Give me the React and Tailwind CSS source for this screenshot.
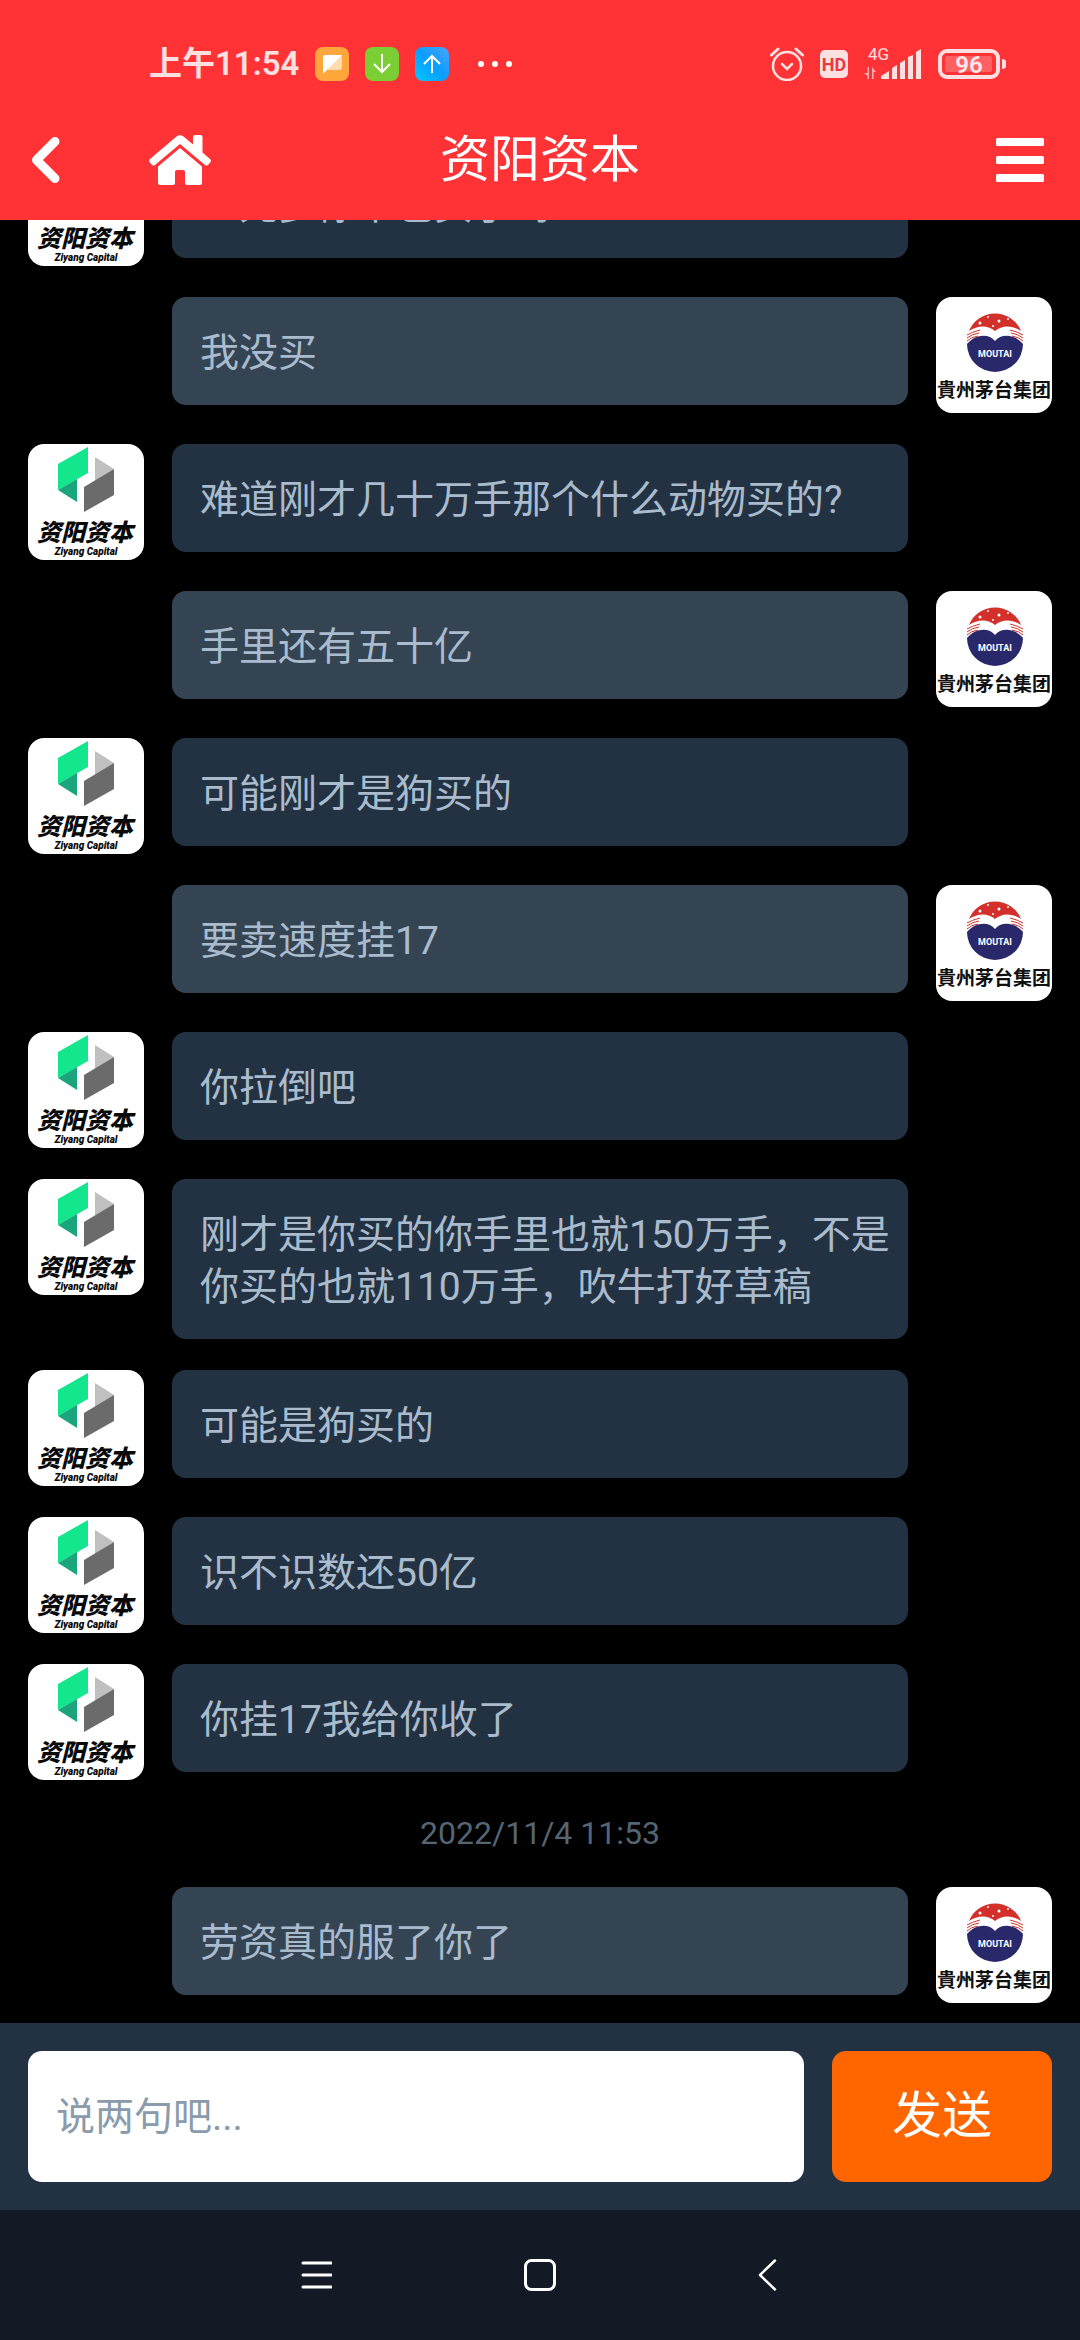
import React from 'react';

const messages = [
  { id: 1, from: 'ziyang', text: '一元多你不也买了吗' },
  { id: 2, from: 'moutai', text: '我没买' },
  { id: 3, from: 'ziyang', text: '难道刚才几十万手那个什么动物买的?' },
  { id: 4, from: 'moutai', text: '手里还有五十亿' },
  { id: 5, from: 'ziyang', text: '可能刚才是狗买的' },
  { id: 6, from: 'moutai', text: '要卖速度挂17' },
  { id: 7, from: 'ziyang', text: '你拉倒吧' },
  { id: 8, from: 'ziyang', text: '刚才是你买的你手里也就150万手，不是你买的也就110万手，吹牛打好草稿' },
  { id: 9, from: 'ziyang', text: '可能是狗买的' },
  { id: 10, from: 'ziyang', text: '识不识数还50亿' },
  { id: 11, from: 'ziyang', text: '你挂17我给你收了' },
  { id: 12, time: '2022/11/4 11:53' },
  { id: 13, from: 'moutai', text: '劳资真的服了你了' },
];

const ZiyangAvatar = () => (
  <svg className="block size-[116px] shrink-0 rounded-2xl bg-white" viewBox="0 0 116 116" role="img" aria-label="资阳资本">
    <path d="M30 20L60 3V29L30 46Z" fill="#13e68c" />
    <path d="M30 46L49 35V58Z" fill="#1ba57c" />
    <path d="M67 13L86 25L67 37Z" fill="#c0c0c0" />
    <path d="M56 43L86 25V51L56 68Z" fill="#6b6b6b" />
    <text x="57" y="97" textAnchor="middle" fontSize="24" fontWeight="900" fontStyle="italic" fill="#0a0a0a">资阳资本</text>
    <text x="58" y="111" textAnchor="middle" fontSize="10" fontWeight="900" fontStyle="italic" fill="#0a0a0a">Ziyang Capital</text>
  </svg>
);

const MoutaiAvatar = () => (
  <svg className="block size-[116px] shrink-0 rounded-2xl bg-white" viewBox="0 0 116 116" role="img" aria-label="贵州茅台集团">
    <path d="M33 34A28 28 0 0 1 85 34C76 28 66 28 59 34C52 28 42 28 33 34Z" fill="#d4302b" />
    <path d="M31 38Q36 35 44 33M31 41Q36 37 43 36M31 44Q35 40 42 39M32 47Q35 43 40 42M87 38Q82 35 74 33M87 41Q82 37 75 36M87 44Q83 40 76 39M86 47Q83 43 78 42" fill="none" stroke="#d4302b" strokeWidth="1" />
    <path d="M31 47C39 37 53 36 59 44C65 36 79 37 87 47A28 28 0 0 1 31 47Z" fill="#29286a" />
    <g fill="#fff">
      <circle cx="44" cy="26" r="1.5" />
      <circle cx="52" cy="20" r="1" />
      <circle cx="63" cy="24" r="1.5" />
      <circle cx="72" cy="22" r="1" />
      <circle cx="57" cy="29" r="1" />
    </g>
    <text x="59" y="60" textAnchor="middle" fontSize="9" fontWeight="700" fill="#fff">MOUTAI</text>
    <text x="1" y="100" fontSize="19" fontWeight="700" fill="#111">貴州茅台集团</text>
  </svg>
);

const Message = ({ message }) => {
  if (message.time) {
    return <time className="block text-center text-[32px] leading-[45px] text-[#566573]">{message.time}</time>;
  }
  const mine = message.from === 'moutai';
  return (
    <div className="flex items-start gap-7">
      {mine ? <div className="w-[116px] shrink-0"></div> : <ZiyangAvatar />}
      <p className={`min-w-0 flex-1 rounded-[14px] pt-[30px] pr-3 pb-[26px] pl-7 text-[39px] leading-[52px] text-[#a9bbcd] ${mine ? 'bg-[#344453]' : 'bg-[#233242]'}`}>
        {message.text}
      </p>
      {mine ? <MoutaiAvatar /> : <div className="w-[116px] shrink-0"></div>}
    </div>
  );
};

const StatusBar = () => (
  <div className="flex h-[100px] items-center pt-7 pl-[149px] pr-[74px] text-white/85">
    <span className="mr-4 text-[33px] leading-10 font-semibold">上午11:54</span>
    <div className="flex gap-4">
      <svg className="size-[34px]" viewBox="0 0 34 34">
        <rect width="34" height="34" rx="8" fill="#ffa63c" />
        <path d="M12 8H24Q27 8 27 11V20Q27 23 24 23H13Z" fill="#ffdcae" />
        <path d="M8 10Q8 8 10 8H27L8 27Z" fill="#fff" />
      </svg>
      <svg className="size-[34px]" viewBox="0 0 34 34">
        <rect width="34" height="34" rx="8" fill="#7bcf35" />
        <path d="M17 7V25M9 17L17 25L25 17" fill="none" stroke="#fff" strokeWidth="2" />
      </svg>
      <svg className="size-[34px]" viewBox="0 0 34 34">
        <defs>
          <linearGradient id="up" x1="0" y1="1" x2="1" y2="0">
            <stop offset="0" stopColor="#00c8ff" />
            <stop offset="0.5" stopColor="#0b9dff" />
            <stop offset="1" stopColor="#4aa4ff" />
          </linearGradient>
        </defs>
        <rect width="34" height="34" rx="8" fill="url(#up)" />
        <path d="M17 26V9M9 17L17 9L25 17" fill="none" stroke="#fff" strokeWidth="2" />
      </svg>
    </div>
    <svg className="ml-7 h-[6px] w-9" viewBox="0 0 36 6" fill="#fff">
      <circle cx="4" cy="3" r="3" />
      <circle cx="18" cy="3" r="3" />
      <circle cx="32" cy="3" r="3" />
    </svg>
    <div className="ml-auto flex items-center gap-4">
      <svg className="size-[34px]" viewBox="0 0 34 34" fill="none" stroke="currentColor" strokeLinecap="round">
        <circle cx="17" cy="19" r="14" strokeWidth="2.5" />
        <path d="M12 17L17 22L22 17" strokeWidth="2.5" />
        <path d="M1.500 8L8 2M26 2L32.500 8" strokeWidth="3" />
      </svg>
      <svg className="size-7" viewBox="0 0 28 28">
        <rect width="28" height="28" rx="5" fill="currentColor" />
        <text x="14" y="21" textAnchor="middle" fontSize="18" fontWeight="700" fill="#e63c3f">HD</text>
      </svg>
      <svg className="h-[34px] w-[58px]" viewBox="0 0 58 34" fill="currentColor">
        <text x="4" y="13" fontSize="17">4G</text>
        <path d="M5 20V32H3.500V29L0 26H3.500V20ZM8 32V20L12 25H9.500V32Z" opacity="0.700" />
        <path d="M17 32V29L25 24V32ZM28 21L33 18V32H28ZM36 16L41 13V32H36ZM44 10L49 8V32H44ZM52 5L57 2V32H52Z" />
      </svg>
      <svg className="h-[30px] w-[68px]" viewBox="0 0 68 30">
        <rect x="2" y="2" width="58" height="26" rx="7" fill="none" stroke="currentColor" strokeWidth="4" />
        <rect x="7" y="7" width="47" height="16" rx="2" fill="#ff6163" />
        <path d="M64 10Q68 10 68 13V17Q68 20 64 20Z" fill="currentColor" />
        <text x="31" y="24" textAnchor="middle" fontSize="24" fontWeight="600" fill="#ffe9ea">96</text>
      </svg>
    </div>
  </div>
);

const TopBar = () => (
  <nav className="grid h-[120px] grid-cols-3 items-center px-7 text-white">
    <div className="flex items-center gap-[87px]">
      <button type="button" aria-label="返回">
        <svg className="h-12 w-[34px]" viewBox="0 0 34 48" fill="none" stroke="currentColor" strokeWidth="9" strokeLinecap="round" strokeLinejoin="round">
          <path d="M27 5.500L8.500 24L27 42.500" />
        </svg>
      </button>
      <a href="#home" aria-label="首页">
        <svg className="h-[50px] w-[62px]" viewBox="0 0 62 50" fill="currentColor">
          <path d="M27.500 1.500Q31 -1 34.500 1.500L44 9.500V2Q44 0 46 0H51.500Q53.500 0 53.500 2V17.500L61 24Q62.500 25.500 61.500 27L59 30Q57.500 31 56 30L31 9L6 30Q4.500 31 3 30L0.500 27Q-0.500 25.500 1 24Z" />
          <path d="M31 13L53 31.500V48Q53 50 51 50H38Q36 50 36 48V37Q36 35 34 35H28Q26 35 26 37V48Q26 50 24 50H11Q9 50 9 48V31.500Z" />
        </svg>
      </a>
    </div>
    <h1 className="text-center text-[50px] leading-[60px]">资阳资本</h1>
    <button type="button" aria-label="菜单" className="mr-2 justify-self-end">
      <svg className="h-11 w-12" viewBox="0 0 48 44" fill="currentColor">
        <rect width="48" height="8" rx="1.500" />
        <rect y="18" width="48" height="8" rx="1.500" />
        <rect y="36" width="48" height="8" rx="1.500" />
      </svg>
    </button>
  </nav>
);

const Composer = () => (
  <form className="flex shrink-0 gap-7 bg-[#233242] p-7" onSubmit={(e) => e.preventDefault()}>
    <input
      type="text"
      aria-label="说两句吧"
      placeholder="说两句吧..."
      className="h-[131px] min-w-0 flex-1 rounded-[14px] bg-white px-7 text-[39px] text-[#233242] outline-none placeholder:text-[#8a9bab]"
    />
    <button type="submit" className="w-[220px] rounded-[14px] bg-[#ff6600] text-[50px] text-white">发送</button>
  </form>
);

const SystemNav = () => (
  <div className="flex h-[130px] shrink-0 items-center justify-center gap-[192px] bg-[#141a25] text-white">
    <button type="button" aria-label="最近任务">
      <svg className="size-8" viewBox="0 0 32 32" stroke="currentColor" strokeWidth="3" strokeLinecap="round">
        <path d="M3 4H31M3 16H31M3 28H31" />
      </svg>
    </button>
    <button type="button" aria-label="主屏幕">
      <svg className="size-8" viewBox="0 0 32 32" fill="none" stroke="currentColor" strokeWidth="3">
        <rect x="1.500" y="1.500" width="29" height="29" rx="6" />
      </svg>
    </button>
    <button type="button" aria-label="返回上一页">
      <svg className="size-8" viewBox="0 0 32 32" fill="none" stroke="currentColor" strokeWidth="2.500" strokeLinecap="round" strokeLinejoin="round">
        <path d="M27 1.500L12 16L27 30.500" />
      </svg>
    </button>
  </div>
);

const App = () => {
  return (
    <div className="flex h-screen flex-col overflow-hidden bg-black font-['Roboto','Noto_Sans_CJK_SC',sans-serif]">
      <header className="shrink-0 bg-[#ff3336]">
        <StatusBar />
        <TopBar />
      </header>
      <main className="flex min-h-0 flex-1 flex-col justify-end gap-[31px] overflow-hidden px-7 pb-5">
        {messages.map((message) => (
          <Message key={message.id} message={message} />
        ))}
      </main>
      <Composer />
      <SystemNav />
    </div>
  );
};

export default App;
